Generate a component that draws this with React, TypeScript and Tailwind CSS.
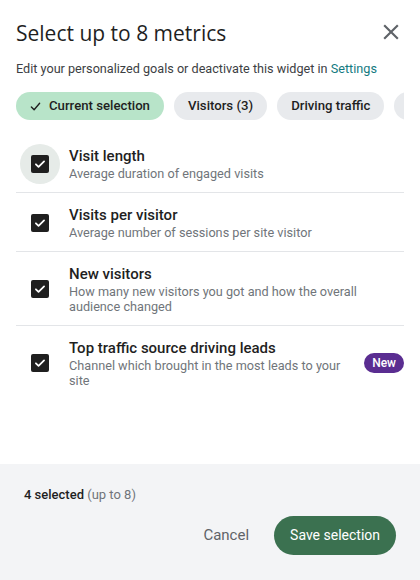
import { useState } from 'react';

const METRICS = [
  { id: 'visit-length', title: 'Visit length', description: 'Average duration of engaged visits' },
  { id: 'visits-per-visitor', title: 'Visits per visitor', description: 'Average number of sessions per site visitor' },
  { id: 'new-visitors', title: 'New visitors', description: 'How many new visitors you got and how the overall audience changed' },
  { id: 'top-source', title: 'Top traffic source driving leads', description: 'Channel which brought in the most leads to your site', isNew: true },
];

const CHIPS = ['Current selection', 'Visitors (3)', 'Driving traffic', 'Engagement'];

const CloseIcon = () => (
  <svg width="26" height="26" viewBox="0 0 24 24" fill="#5f6368">
    <path d="M19 6.41L17.59 5 12 10.59 6.41 5 5 6.41 10.59 12 5 17.59 6.41 19 12 13.41 17.59 19 19 17.59 13.41 12z" />
  </svg>
);

const Checkbox = ({ checked, focused }: { checked: boolean; focused?: boolean }) => (
  <div className={`w-10 h-10 flex items-center justify-center rounded-full ${focused ? 'bg-[#e6ebe8]' : ''}`}>
    <div className={`w-[18px] h-[18px] rounded-[2px] flex items-center justify-center ${checked ? 'bg-[#1f1f1f]' : 'border-2 border-[#5f6368]'}`}>
      {checked && (
        <svg width="14" height="14" viewBox="0 0 24 24" fill="none" stroke="white" strokeWidth="3" strokeLinecap="round" strokeLinejoin="round">
          <path d="M5 12.5l4.5 4.5L19 7.5" />
        </svg>
      )}
    </div>
  </div>
);

export default function App() {
  const [selected, setSelected] = useState<string[]>(METRICS.map((m) => m.id));
  const [chip, setChip] = useState(0);

  const toggle = (id: string) =>
    setSelected((s) => (s.includes(id) ? s.filter((x) => x !== id) : [...s, id]));

  return (
    <div className="h-[580px] w-[420px] flex flex-col bg-white font-['Roboto',sans-serif] text-[#1f1f1f]">
      <div className="px-4 pt-[18px] flex items-start justify-between">
        <h1 className="font-['Open_Sans',sans-serif] text-[21px] leading-7 pt-[1px]">Select up to 8 metrics</h1>
        <button className="mt-[1px]">
          <CloseIcon />
        </button>
      </div>
      <p className="px-4 mt-[13px] text-[12.65px] leading-[18px] text-[#3c4043]">
        Edit your personalized goals or deactivate this widget in{' '}
        <a className="text-[#137a7f]">Settings</a>
      </p>

      <div className="mx-4 mt-[14px] flex gap-[10px] overflow-hidden">
        {CHIPS.map((c, i) => (
          <button
            key={c}
            onClick={() => setChip(i)}
            className={`shrink-0 h-7 px-[14px] rounded-full flex items-center gap-[8px] text-[13.2px] font-medium text-[#1f1f1f] ${
              chip === i ? 'bg-[#b8e4c9]' : 'bg-[#e8eaed]'
            }`}
          >
            {chip === i && (
              <svg width="11" height="11" viewBox="0 0 24 24" fill="none" stroke="#1f1f1f" strokeWidth="3" strokeLinecap="round" strokeLinejoin="round">
                <path d="M3 13l6 6L21 5" />
              </svg>
            )}
            {c}
          </button>
        ))}
      </div>

      <div className="mx-4 mt-[14px]">
        {METRICS.map((m, i) => (
          <div
            key={m.id}
            onClick={() => toggle(m.id)}
            className={`flex items-center pt-3 pb-[11px] ${i < METRICS.length - 1 ? 'border-b border-[#e3e5e8]' : ''}`}
          >
            <div className="ml-1 shrink-0 -my-[3px]">
              <Checkbox checked={selected.includes(m.id)} focused={i === 0} />
            </div>
            <div className="ml-[9px] flex-1 min-w-0">
              <div className="text-[15px] leading-5 font-medium">{m.title}</div>
              <div className="text-[12.7px] leading-[15px] text-[#70757a]">{m.description}</div>
            </div>
            {m.isNew && (
              <span className="ml-4 shrink-0 h-5 px-[8px] rounded-full bg-[#5a2d91] text-white text-[12px] font-medium flex items-center">
                New
              </span>
            )}
          </div>
        ))}
      </div>

      <div className="mt-auto h-[116px] bg-[#f3f4f6] px-6 pt-[23px]">
        <div className="text-[13px] leading-4">
          <span className="font-medium">{selected.length} selected</span>{' '}
          <span className="text-[#70757a]">(up to 8)</span>
        </div>
        <div className="mt-[13px] flex justify-end items-center gap-[25px]">
          <button className="text-[15px] text-[#5f6368]">Cancel</button>
          <button className="h-[39px] px-4 rounded-full bg-[#3b7150] text-white text-[14px]">Save selection</button>
        </div>
      </div>
    </div>
  );
}
